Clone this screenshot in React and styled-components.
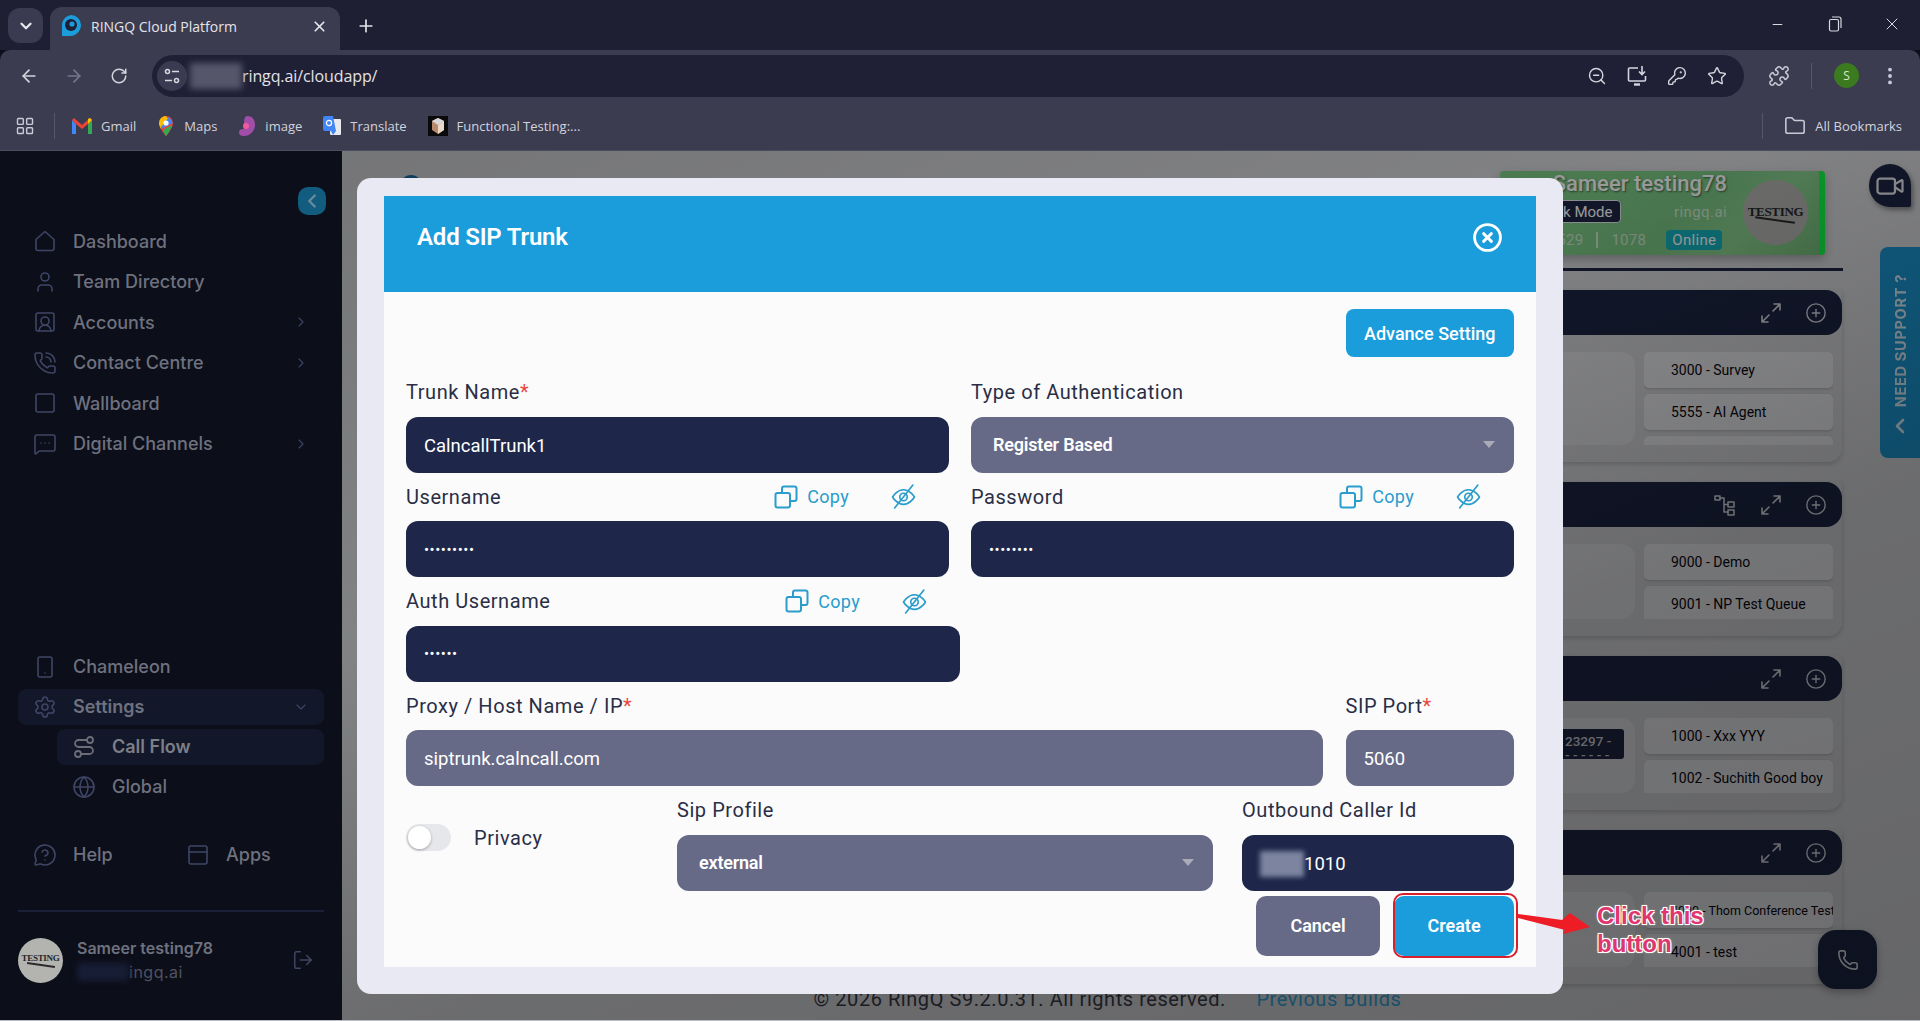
import React from "react";
import styled, { createGlobalStyle } from "styled-components";
import {
  ArrowLeft, ArrowRight, RotateCw, ZoomOut, KeyRound, Star, Puzzle, EllipsisVertical, LayoutGrid, Folder, X, Plus,
  ChevronDown, ChevronRight, ChevronLeft, Minus, User, SquareUserRound, PhoneCall, Square, MessageSquareMore,
  Smartphone, Settings, Route, Globe, MessageCircleQuestion, PanelTop, LogOut, CirclePlus, Video, Phone, CircleX,
} from "lucide-react";

const Global = createGlobalStyle`
  html, body { margin: 0; padding: 0; width: 1920px; height: 1021px; overflow: hidden; background: #0c0e19; }
  * { box-sizing: border-box; }
`;

const Page = styled.div`
  width: 1920px; height: 1021px; display: flex; flex-direction: column; overflow: hidden;
  font-family: "Roboto", "Liberation Sans", sans-serif;
`;

/* ---------- browser chrome ---------- */
const TabStrip = styled.div`
  height: 50px; background: #1e1f33; display: flex; align-items: flex-start; padding: 7px 0 0 8px; flex: none;
`;
const TabSearch = styled.div`
  width: 35px; height: 35px; margin-top: 1px; border-radius: 12px; background: #3a3b50; color: #e8e8ee;
  display: flex; align-items: center; justify-content: center;
`;
const Tab = styled.div`
  width: 290px; height: 43px; margin-left: 7px; background: #3b3c50; border-radius: 12px 12px 0 0; display: flex;
  align-items: center; padding: 0 12px 5px 10px; color: #e4e4ea; font: 400 14px "Open Sans", sans-serif;
`;
const TabTitle = styled.span` margin-left: 9px; flex: 1; white-space: nowrap; `;
const NewTab = styled.div` margin: 9px 0 0 16px; color: #e4e4ea; display: flex; `;
const WinControls = styled.div` margin: -7px 0 0 auto; display: flex; height: 48px; `;
const WinBtn = styled.div` width: 57px; display: flex; align-items: center; justify-content: center; color: #d9d9e0; `;

const Toolbar = styled.div`
  height: 51px; background: #3b3c50; display: flex; align-items: center; padding: 0 0 0 6px; flex: none;
  border-radius: 10px 10px 0 0;
`;
const NavBtn = styled.div`
  width: 45px; display: flex; justify-content: center; color: ${p => (p.$off ? "#75768a" : "#d4d5de")};
`;
const Omnibox = styled.div`
  margin: 0 0 0 11px; width: 1592px; height: 42px; border-radius: 21px; background: #1f2035; display: flex; align-items: center;
  padding: 0 7px 0 5px; color: #e2e2e8; font: 400 16px "Open Sans", sans-serif;
`;
const TuneChip = styled.div`
  width: 30px; height: 30px; border-radius: 50%; background: #3a3b50; display: flex; align-items: center; justify-content: center;
  color: #d8d8e0; flex: none; margin-right: 3px;
`;
const Smudge = styled.span`
  display: inline-block; flex: none; width: ${p => p.$w}px; height: ${p => p.$h}px; background: ${p => p.$c};
  filter: blur(${p => p.$blur || 3}px);
`;
const UrlText = styled.span` flex: 1; letter-spacing: -0.1px; `;
const OmniIcon = styled.div` width: 40px; display: flex; justify-content: center; color: #d4d5de; `;
const ToolIcon = styled.div` display: flex; color: #c9cad6; margin-left: ${p => p.$ml}px; `;
const ToolSep = styled.div` width: 1px; height: 26px; background: #55566a; margin-left: ${p => p.$ml}px; `;
const ProfileDot = styled.div`
  width: 25px; height: 25px; border-radius: 50%; background: #3b7a1f; color: #d6e8cf; margin-left: 22px;
  font: 500 12px "Open Sans", sans-serif; display: flex; align-items: center; justify-content: center;
`;

const Bookmarks = styled.div`
  height: 50px; background: #3b3c50; border-bottom: 1px solid #4b4c60; display: flex; align-items: center; padding: 0 18px 0 15px;
  color: #d2d3dc; font: 400 13px "Open Sans", sans-serif; flex: none;
`;
const Bookmark = styled.div` display: flex; align-items: center; gap: 9px; margin-left: ${p => p.$ml ?? 21}px; white-space: nowrap; `;
const AllBookmarks = styled.div` margin-left: auto; display: flex; align-items: center; white-space: nowrap; `;

/* ---------- app ---------- */
const Viewport = styled.div` position: relative; flex: 1; display: flex; min-height: 0; `;
const BottomLine = styled.div` height: 1px; background: #b9bec4; flex: none; `;

const Sidebar = styled.aside`
  width: 342px; flex: none; background: #0c0e19; padding: 36px 18px 0; display: flex; flex-direction: column;
  font-family: "Inter", sans-serif; color: #6e717f;
`;
const CollapseBtn = styled.div`
  width: 28px; height: 28px; border-radius: 10px; background: #125c80; color: #6c8b9d; align-self: flex-end; margin: 0 -2px 8px 0;
  display: flex; align-items: center; justify-content: center; flex: none;
`;
const NavList = styled.nav`
  display: flex; flex-direction: column; gap: ${p => p.$gap}px; margin-top: ${p => p.$mt || 0}px;
`;
const NavItem = styled.div`
  height: 36px; display: flex; align-items: center; gap: 16px; padding: 0 15px; border-radius: 8px; font-size: 18px;
  font-weight: ${p => (p.$active ? 600 : 500)}; margin-left: ${p => (p.$sub ? 39 : 0)}px;
  background: ${p => (p.$active ? "#121829" : "transparent")}; color: ${p => (p.$sub && p.$active ? "#7d7f88" : "#6e717f")};
  white-space: nowrap;
`;
const NavIcon = styled.span` display: flex; flex: none; width: 24px; color: ${p => p.$c || "#3f4566"}; `;
const NavChevron = styled.span` display: flex; margin-left: auto; color: #3f4566; `;
const HelpRow = styled.div` display: grid; grid-template-columns: 153px 153px; margin-top: 32px; `;
const SideDivider = styled.div` height: 2px; background: #1b1f38; margin-top: 37px; flex: none; `;
const UserRow = styled.div` display: flex; align-items: center; margin-top: 26px; `;
const UserAvatar = styled.div`
  width: ${p => p.$d}px; height: ${p => p.$d}px; border-radius: 50%; flex: none; background: ${p => p.$bg};
  display: flex; align-items: center; justify-content: center; overflow: hidden; position: relative; flex-direction: column;
  color: #26262a; font: 700 ${p => p.$fs}px "Liberation Serif", serif; letter-spacing: -0.3px; line-height: 1;
`;
const AvatarScrawl = styled.span` display: block; width: 62%; height: 2px; background: #2b2b2e; transform: rotate(8deg); margin-top: 1px; `;
const UserText = styled.div` margin-left: 14px; display: flex; flex-direction: column; gap: 4px; `;
const UserName = styled.div` font-size: 16px; font-weight: 600; color: #6e717f; line-height: 20px; `;
const UserMail = styled.div` font-size: 16px; font-weight: 400; color: #4f5264; display: flex; align-items: center; line-height: 20px; letter-spacing: .5px; `;
const LogoutBtn = styled.span` margin-left: auto; margin-right: 10px; display: flex; color: #3f4566; `;

const Main = styled.main`
  position: relative; flex: 1; min-width: 0; background: #d8d9dd; padding: 20px 77px 0 30px; display: flex; flex-direction: column;
`;
const Backdrop = styled.div`
  position: absolute; inset: 0; z-index: 5;
  background: linear-gradient(160deg, rgba(0,0,0,.46) 0%, rgba(0,0,0,.40) 35%, rgba(0,0,0,.5) 62%, rgba(0,0,0,.53) 100%);
`;
const LogoDot = styled.div`
  position: absolute; left: 58px; top: 24px; width: 22px; height: 22px; border-radius: 50%; background: #1b6fa8;
`;
const ProfileCard = styled.div`
  align-self: flex-end; margin-right: 18px; width: 325px; height: 84px; flex: none; display: flex; align-items: stretch; border-radius: 4px;
  background: linear-gradient(135deg, #7fcf88 0%, #7ac683 55%, #88d08e 75%, #72bb7a 100%);
  box-shadow: 0 4px 10px rgba(0,0,0,.25); overflow: hidden;
`;
const CardInfo = styled.div` flex: 1; min-width: 0; display: flex; flex-direction: column; `;
const CardTitle = styled.div`
  text-align: right; font-size: 22px; font-weight: 500; line-height: 26px; color: #fff; text-shadow: 1px 1px 2px rgba(0,0,0,.5);
`;
const CardRow = styled.div` display: flex; align-items: center; justify-content: space-between; margin-top: ${p => p.$mt}px; `;
const ModeChip = styled.div`
  height: 23px; padding: 0 8px; margin-left: 31px; border-radius: 4px; background: #1c2544; border: 1px solid #e6e8ee; color: #fff;
  font-size: 15px; display: flex; align-items: center;
`;
const CardMail = styled.div` font-size: 15px; color: #cfe9cf; letter-spacing: .4px; `;
const CardStats = styled.div`
  display: flex; align-items: center; font-size: 15px; color: #cde6cd; letter-spacing: .3px; margin-left: 31px; gap: 13px;
`;
const StatBar = styled.span` width: 2px; height: 16px; background: #cde6cd; `;
const OnlineChip = styled.span`
  height: 20px; padding: 0 6px; border-radius: 4px; background: #14b0bd; color: #fff; display: flex; align-items: center; margin-left: 7px;
`;
const CardPhoto = styled.div` margin: 9px 11px 0 16px; flex: none; `;
const CardBar = styled.div` width: 6px; flex: none; background: #12f947; `;
const Rule = styled.div` height: 3px; background: #1c2544; margin-top: 13px; flex: none; `;
const PanelStack = styled.div` margin-top: 19px; display: flex; flex-direction: column; gap: 20px; padding-right: 1px; flex: none; `;
const Panel = styled.section` background: #d4d5d8; border-radius: 0 0 14px 0; box-shadow: 0 2px 5px rgba(0,0,0,.18); `;
const PanelHead = styled.header`
  height: 45px; background: #1c2544; border-radius: 0 16px 16px 0; display: flex; align-items: center; justify-content: flex-end;
  padding-right: 15px; gap: 22px; color: #dadce4;
`;
const PanelBody = styled.div` display: flex; gap: 9px; padding: 17px 9px 17px 0; `;
const PanelLeft = styled.div`
  flex: 1; height: ${p => p.$h}px; background: #e0e1e4; border-radius: 0 14px 14px 0; display: flex; justify-content: flex-end; padding: 11px 11px 0 0;
`;
const DarkChip = styled.div`
  width: 200px; height: 30px; background: #1c2544; border-radius: 3px; color: #d0d2da; font-size: 13.5px; font-weight: 500; line-height: 14px;
  padding: 5px 0 0 141px; overflow: hidden; white-space: nowrap;
`;
const ItemList = styled.div` width: 189px; height: ${p => p.$h}px; overflow: hidden; display: flex; flex-direction: column; gap: 6px; `;
const Item = styled.div`
  height: 36px; flex: none; border-radius: 5px; background: #e8e9ed; box-shadow: 0 1px 3px rgba(0,0,0,.18); padding: 0 0 0 27px;
  display: flex; align-items: center; color: #05050f; font-size: ${p => p.$fs || 14}px; white-space: nowrap;
`;
const Footer = styled.footer` margin-top: 3px; text-align: center; font-size: 20px; line-height: 24px; color: #3a3c48; flex: none; letter-spacing: .55px; `;
const FootLink = styled.span` color: #35a5dc; margin-left: 25px; `;

const VideoBtn = styled.div`
  position: absolute; left: 1527px; top: 13px; width: 42px; height: 43px; border-radius: 50% 50% 2px 50%; background: #1c2544; color: #e6e8ee;
  display: flex; align-items: center; justify-content: center; box-shadow: 2px 3px 5px rgba(0,0,0,.4);
`;
const SupportTab = styled.div`
  position: absolute; right: 0; top: 96px; width: 40px; height: 211px; background: #1b96d2; border-radius: 8px 0 0 8px; color: #d6ebf7;
  display: flex; flex-direction: column; align-items: center; padding-top: 27px; gap: 7px;
`;
const SupportText = styled.span`
  writing-mode: vertical-rl; transform: rotate(180deg); font: 700 14.5px "Inter", sans-serif; letter-spacing: .7px; white-space: nowrap;
`;
const PhoneBtn = styled.div`
  position: absolute; left: 1476px; top: 779px; width: 59px; height: 59px; border-radius: 18px; background: #1c2544; color: #d8dae2;
  display: flex; align-items: center; justify-content: center; box-shadow: 0 3px 8px rgba(0,0,0,.3);
`;

/* ---------- modal ---------- */
const Modal = styled.div`
  position: absolute; z-index: 10; left: 357px; top: 27px; width: 1206px; background: #e8e9f2; border-radius: 14px;
  padding: 18px 27px 27px;
`;
const ModalHead = styled.div`
  height: 96px; background: #1b9cdb; display: flex; align-items: center; justify-content: space-between; padding: 0 33px 14px;
  color: #fff;
`;
const ModalTitle = styled.h2` margin: 0; font-size: 24px; font-weight: 600; letter-spacing: -.2px; `;
const ModalBody = styled.div` background: #fbfbfc; padding: 17px 22px 11px; `;
const TopActions = styled.div` display: flex; justify-content: flex-end; margin-bottom: 22px; `;
const AdvanceBtn = styled.button`
  all: unset; box-sizing: border-box; width: 168.5px; height: 48px; border-radius: 8px; background: #1b9cdb; color: #fff; font: 500 18px "Roboto", sans-serif;
  display: flex; align-items: center; justify-content: center;
`;
const FormRow = styled.div`
  display: grid; grid-template-columns: ${p => p.$cols}; column-gap: ${p => p.$gap || 22}px; margin-bottom: 11px;
`;
const Field = styled.div` min-width: 0; `;
const LabelRow = styled.div`
  height: 26px; margin-bottom: 11.5px; display: flex; align-items: center; justify-content: space-between; padding-right: 33px;
`;
const Label = styled.label` font-size: 20px; color: #2a2e45; letter-spacing: .55px; white-space: nowrap; `;
const Req = styled.span` color: #e8483f; `;
const CopyGroup = styled.div` display: flex; align-items: center; color: #2a9dcc; font-size: 18px; letter-spacing: .3px; `;
const CopyText = styled.span` margin: 0 42px 0 9px; `;
const InputBox = styled.div`
  height: 56px; border-radius: 12px; display: flex; align-items: center; color: #fff; padding: 2px 18px 0; font-size: 18.5px;
  background: ${p => (p.$muted ? "#676a87" : "#1e274a")}; white-space: nowrap;
`;
const Dots = styled.span` font-size: 15px; letter-spacing: .55px; margin-top: -1px; `;
const SelectBox = styled.div`
  height: 56px; border-radius: 12px; background: #676a87; color: #fff; display: flex; align-items: center; justify-content: space-between;
  padding: 0 19px 0 22px; font-size: 18px; font-weight: 600; letter-spacing: -.2px;
`;
const Caret = styled.span`
  width: 0; height: 0; border-left: 6px solid transparent; border-right: 6px solid transparent; border-top: 7px solid #a9abb8;
`;
const ProfileRow = styled.div` display: grid; grid-template-columns: 271px 536px 272px; column-gap: 0; `;
const PrivacyGroup = styled.div` display: flex; align-items: center; gap: 23px; margin-top: 27px; align-self: start; height: 27px; `;
const Switch = styled.span`
  width: 45px; height: 27px; border-radius: 14px; background: #e6e7ea; padding: 2px; flex: none; display: flex;
`;
const SwitchKnob = styled.span` width: 23px; height: 23px; border-radius: 50%; background: #fff; box-shadow: 0 1px 3px rgba(0,0,0,.3); `;
const OutboundField = styled(Field)` margin-left: 29px; width: 272px; transform: none; `;
const ActionRow = styled.div` display: flex; justify-content: flex-end; gap: 14px; margin-top: 5px; `;
const ActionBtn = styled.button`
  all: unset; box-sizing: border-box; position: relative; height: 60px; width: ${p => p.$w}px; border-radius: 10px; color: #fff;
  background: ${p => (p.$primary ? "#1b9cdb" : "#676a87")}; font: 600 18px "Roboto", sans-serif; display: flex; align-items: center; justify-content: center;
`;
const CalloutRing = styled.span`
  position: absolute; inset: -3px -4px -2px -1px; border: 2px solid #d8202c; border-radius: 10px;
`;
const CalloutArrow = styled.svg` position: absolute; z-index: 11; left: 1515px; top: 759px; `;
const CalloutText = styled.div`
  position: absolute; z-index: 11; left: 1597px; top: 751px; width: 130px; font: 700 24px/28px "Liberation Sans", sans-serif; color: #e0356f;
  text-shadow: -1px -1px 0 #fff, 1px -1px 0 #fff, -1px 1px 0 #fff, 1px 1px 0 #fff, 0 0 3px rgba(255,255,255,.8);
`;

/* ---------- drawn icons ---------- */
const Svg = ({ s = 24, sw = 2, children, fill = "none" }) => (
  <svg width={s} height={s} viewBox="0 0 24 24" fill={fill} stroke="currentColor" strokeWidth={sw} strokeLinecap="round" strokeLinejoin="round">{children}</svg>
);
const HomeIcon = () => <Svg sw={1.6}><path d="M3 10.5 12 2.5l9 8V19.5a2 2 0 0 1-2 2H5a2 2 0 0 1-2-2z" /></Svg>;
const ExpandIcon = () => <Svg s={24} sw={1.6}><path d="M15 3h6v6M21 3l-7 7M3 15v6h6M3 21l7-7" /></Svg>;
const TreeIcon = () => (
  <Svg s={24} sw={1.5}>
    <rect x="2" y="3" width="5" height="4" /><rect x="15" y="9" width="6" height="5" /><rect x="15" y="17" width="6" height="5" />
    <path d="M7 5h4v14h4M11 11.5h4" />
  </Svg>
);
const CopyIcon = () => (
  <Svg s={24} sw={2}>
    <rect x="1.5" y="8" width="14.5" height="14.5" rx="2" /><path d="M8 8V3.5a2 2 0 0 1 2-2h10.5a2 2 0 0 1 2 2V14a2 2 0 0 1-2 2H16" />
  </Svg>
);
const EyeOffIcon = () => (
  <Svg s={25} sw={1.6}>
    <path d="M1.5 12.5S5.5 5.5 12 5.5s10.5 7 10.5 7-4 7-10.5 7-10.5-7-10.5-7z" /><circle cx="12" cy="12.5" r="3.6" /><path d="M3.5 23 21 1" />
  </Svg>
);
const TuneIcon = () => (
  <svg width="18" height="18" viewBox="0 0 18 18" fill="none" stroke="currentColor" strokeWidth="1.5">
    <circle cx="4.5" cy="4.5" r="2" /><path d="M9 4.5h7M2 13.5h7" /><circle cx="13.5" cy="13.5" r="2" />
  </svg>
);
const MonitorDownIcon = () => (
  <svg width="22" height="22" viewBox="0 0 22 22" fill="none" stroke="currentColor" strokeWidth="1.6">
    <path d="M12 3H3.5a1 1 0 0 0-1 1v11a1 1 0 0 0 1 1h15a1 1 0 0 0 1-1v-4" /><path d="M16 1v8M13 6.5l3 3 3-3" /><path d="M8 19.5h6" strokeWidth="2.4" />
  </svg>
);
const RestoreIcon = () => (
  <svg width="14" height="16" viewBox="0 0 14 16" fill="none" stroke="currentColor" strokeWidth="1.2">
    <rect x="1.5" y="3.5" width="9" height="11.5" rx="1.5" /><path d="M4 1h7a2 2 0 0 1 2 2v9" />
  </svg>
);
const TabFavicon = () => (
  <svg width="22" height="24" viewBox="0 0 22 24">
    <path d="M11 1a10 10 0 0 1 10 10c0 6-5 11-11 11H2V10A10 10 0 0 1 11 1z" fill="#1b9cdb" />
    <circle cx="11" cy="11" r="6" fill="#1e1f33" /><circle cx="12" cy="10" r="2.6" fill="#1b9cdb" />
  </svg>
);
const GmailIcon = () => (
  <svg width="20" height="18" viewBox="0 0 20 18">
    <path d="M0 3v14h4V7z" fill="#4285f4" /><path d="M16 7v10h4V3z" fill="#34a853" />
    <path d="M0 3l4 4 6 5 6-5 4-4-2-2-8 7-8-7z" fill="#ea4335" /><path d="M16 2l2-1 2 2-4 4z" fill="#fbbc04" />
  </svg>
);
const MapsIcon = () => (
  <svg width="18" height="22" viewBox="0 0 18 22">
    <path d="M9 1a7 7 0 0 1 7 7c0 5-7 13-7 13S2 13 2 8a7 7 0 0 1 7-7z" fill="#ea4335" /><path d="M2 8c0 2 1 4 2 6l8-9-3-4a7 7 0 0 0-7 7z" fill="#fbbc04" />
    <path d="M12 2l4 6-12 6 0-2z" fill="#4285f4" /><path d="M6 15c1 3 3 6 3 6s5-6 6-11z" fill="#34a853" /><circle cx="9" cy="8" r="2.6" fill="#fff" />
  </svg>
);
const ImageIcon = () => (
  <svg width="18" height="22" viewBox="0 0 18 22">
    <path d="M9 1c5 0 8 3 8 9s-5 11-11 11c-3 0-5-1-5-4 0-2 2-3 4-3 3-1 1-3 1-6 0-4 1-7 3-7z" fill="#a14ea8" /><circle cx="8" cy="11" r="3" fill="#f05a9c" />
  </svg>
);
const TranslateIcon = () => (
  <svg width="18" height="20" viewBox="0 0 18 20">
    <rect x="7" y="3" width="11" height="16" rx="1" fill="#e8eaed" /><path d="M0 2a2 2 0 0 1 2-2h8l3 15H2a2 2 0 0 1-2-2z" fill="#4285f4" />
    <circle cx="6" cy="7" r="2.6" fill="none" stroke="#fff" strokeWidth="1.2" /><path d="M10 19l3-4h-5z" fill="#4285f4" />
  </svg>
);
const CubeIcon = () => (
  <svg width="20" height="20" viewBox="0 0 20 20">
    <rect width="20" height="20" fill="#0a0a0c" /><path d="M10 2l6 3v9l-6 4-6-4V5z" fill="#b98a6c" /><path d="M10 9l6-4v9l-6 4z" fill="#e9d9c8" /><path d="M10 2l6 3-6 4-6-4z" fill="#d9d9d9" />
  </svg>
);
const BrandLogo = ({ d, fs }) => (
  <UserAvatar $d={d} $bg="#b3b4b0" $fs={fs}>
    TESTING
    <AvatarScrawl />
  </UserAvatar>
);

const NAV_TOP = [
  ["Dashboard", <HomeIcon key="i" />],
  ["Team Directory", <User size={24} strokeWidth={1.6} key="i" />],
  ["Accounts", <SquareUserRound size={24} strokeWidth={1.6} key="i" />, true],
  ["Contact Centre", <PhoneCall size={24} strokeWidth={1.6} key="i" />, true],
  ["Wallboard", <Square size={24} strokeWidth={1.6} key="i" />],
  ["Digital Channels", <MessageSquareMore size={24} strokeWidth={1.6} key="i" />, true],
];

const PANELS = [
  { lh: 93, items: ["3000 - Survey", "5555 - AI Agent", " "] },
  { lh: 75, tree: true, items: ["9000 - Demo", "9001 - NP Test Queue"] },
  { lh: 75, chip: true, items: ["1000 - Xxx YYY", "1002 - Suchith Good boy"] },
  { lh: 75, items: ["4000 - Thom Conference Test", "4001 - test"], small: true },
];

const CopyTools = () => (
  <CopyGroup>
    <CopyIcon />
    <CopyText>Copy</CopyText>
    <EyeOffIcon />
  </CopyGroup>
);

export default function App() {
  return (
    <Page>
      <Global />
      <TabStrip>
        <TabSearch><ChevronDown size={18} strokeWidth={3} /></TabSearch>
        <Tab>
          <TabFavicon />
          <TabTitle>RINGQ Cloud Platform</TabTitle>
          <X size={17} strokeWidth={2.4} />
        </Tab>
        <NewTab><Plus size={20} strokeWidth={2} /></NewTab>
        <WinControls>
          <WinBtn><Minus size={15} strokeWidth={1.6} /></WinBtn>
          <WinBtn><RestoreIcon /></WinBtn>
          <WinBtn><X size={20} strokeWidth={1.2} /></WinBtn>
        </WinControls>
      </TabStrip>
      <Toolbar>
        <NavBtn><ArrowLeft size={20} /></NavBtn>
        <NavBtn $off><ArrowRight size={20} /></NavBtn>
        <NavBtn><RotateCw size={18} /></NavBtn>
        <Omnibox>
          <TuneChip><TuneIcon /></TuneChip>
          <Smudge $w={52} $h={26} $c="#55566a" />
          <UrlText>ringq.ai/cloudapp/</UrlText>
          <OmniIcon><ZoomOut size={20} strokeWidth={1.7} /></OmniIcon>
          <OmniIcon><MonitorDownIcon /></OmniIcon>
          <OmniIcon><KeyRound size={20} strokeWidth={1.7} /></OmniIcon>
          <OmniIcon><Star size={20} strokeWidth={1.7} /></OmniIcon>
        </Omnibox>
        <ToolIcon $ml={24}><Puzzle size={22} strokeWidth={1.7} /></ToolIcon>
        <ToolSep $ml={21} />
        <ProfileDot>S</ProfileDot>
        <ToolIcon $ml={20}><EllipsisVertical size={22} strokeWidth={2.2} /></ToolIcon>
      </Toolbar>
      <Bookmarks>
        <ToolIcon $ml={0}><LayoutGrid size={20} strokeWidth={1.7} /></ToolIcon>
        <ToolSep $ml={19} />
        <Bookmark $ml={17}><GmailIcon />Gmail</Bookmark>
        <Bookmark><MapsIcon />Maps</Bookmark>
        <Bookmark><ImageIcon />image</Bookmark>
        <Bookmark><TranslateIcon />Translate</Bookmark>
        <Bookmark><CubeIcon />Functional Testing:...</Bookmark>
        <AllBookmarks>
          <ToolSep $ml={0} />
          <ToolIcon $ml={21}><Folder size={22} strokeWidth={1.7} /></ToolIcon>
          <Bookmark $ml={9}>All Bookmarks</Bookmark>
        </AllBookmarks>
      </Bookmarks>

      <Viewport>
        <Sidebar>
          <CollapseBtn><ChevronLeft size={22} strokeWidth={2.5} /></CollapseBtn>
          <NavList $gap={4.5}>
            {NAV_TOP.map(([t, icon, more]) => (
              <NavItem key={t}>
                <NavIcon>{icon}</NavIcon>{t}
                {more && <NavChevron><ChevronRight size={16} strokeWidth={1.6} /></NavChevron>}
              </NavItem>
            ))}
          </NavList>
          <NavList $gap={4} $mt={187}>
            <NavItem><NavIcon><Smartphone size={24} strokeWidth={1.6} /></NavIcon>Chameleon</NavItem>
            <NavItem $active><NavIcon><Settings size={24} strokeWidth={1.6} /></NavIcon>Settings<NavChevron><ChevronDown size={16} strokeWidth={1.6} /></NavChevron></NavItem>
            <NavItem $sub $active><NavIcon $c="#6b6d77"><Route size={24} strokeWidth={1.8} /></NavIcon>Call Flow</NavItem>
            <NavItem $sub><NavIcon><Globe size={24} strokeWidth={1.6} /></NavIcon>Global</NavItem>
          </NavList>
          <HelpRow>
            <NavItem><NavIcon><MessageCircleQuestion size={24} strokeWidth={1.6} /></NavIcon>Help</NavItem>
            <NavItem><NavIcon><PanelTop size={24} strokeWidth={1.6} /></NavIcon>Apps</NavItem>
          </HelpRow>
          <SideDivider />
          <UserRow>
            <BrandLogo d={45} fs={9} />
            <UserText>
              <UserName>Sameer testing78</UserName>
              <UserMail><Smudge $w={52} $h={18} $c="#171d35" />ingq.ai</UserMail>
            </UserText>
            <LogoutBtn><LogOut size={22} strokeWidth={1.6} /></LogoutBtn>
          </UserRow>
        </Sidebar>

        <Main>
          <LogoDot />
          <ProfileCard>
            <CardInfo>
              <CardTitle>Sameer testing78</CardTitle>
              <CardRow $mt={3}>
                <ModeChip>Dark Mode</ModeChip>
                <CardMail>ringq.ai</CardMail>
              </CardRow>
              <CardRow $mt={7}>
                <CardStats>
                  917529<StatBar />1078
                  <OnlineChip>Online</OnlineChip>
                </CardStats>
              </CardRow>
            </CardInfo>
            <CardPhoto><BrandLogo d={65} fs={13} /></CardPhoto>
            <CardBar />
          </ProfileCard>
          <Rule />
          <PanelStack>
            {PANELS.map((p, i) => (
              <Panel key={i}>
                <PanelHead>
                  {p.tree && <TreeIcon />}
                  <ExpandIcon />
                  <CirclePlus size={22} strokeWidth={1.5} />
                </PanelHead>
                <PanelBody>
                  <PanelLeft $h={p.lh}>
                    {p.chip && <DarkChip>23297 -<br />- - - - - -</DarkChip>}
                  </PanelLeft>
                  <ItemList $h={p.lh}>
                    {p.items.map((t, j) => (
                      <Item key={j} $fs={p.small && j === 0 ? 12.5 : 14}>{t}</Item>
                    ))}
                  </ItemList>
                </PanelBody>
              </Panel>
            ))}
          </PanelStack>
          <Footer>© 2026 RingQ S9.2.0.31. All rights reserved. <FootLink>Previous Builds</FootLink></Footer>
          <VideoBtn><Video size={30} strokeWidth={1.8} /></VideoBtn>
          <SupportTab>
            <SupportText>NEED SUPPORT ?</SupportText>
            <ChevronLeft size={24} strokeWidth={2.6} />
          </SupportTab>
          <PhoneBtn><Phone size={22} strokeWidth={1.8} /></PhoneBtn>
          <Backdrop />
        </Main>

        <Modal>
          <ModalHead>
            <ModalTitle>Add SIP Trunk</ModalTitle>
            <CircleX size={31} strokeWidth={2.2} />
          </ModalHead>
          <ModalBody>
            <TopActions><AdvanceBtn>Advance Setting</AdvanceBtn></TopActions>
            <FormRow $cols="543px 543px">
              <Field>
                <LabelRow><Label>Trunk Name<Req>*</Req></Label></LabelRow>
                <InputBox>CalncallTrunk1</InputBox>
              </Field>
              <Field>
                <LabelRow><Label>Type of Authentication</Label></LabelRow>
                <SelectBox>Register Based<Caret /></SelectBox>
              </Field>
            </FormRow>
            <FormRow $cols="543px 543px">
              <Field>
                <LabelRow><Label>Username</Label><CopyTools /></LabelRow>
                <InputBox><Dots>•••••••••</Dots></InputBox>
              </Field>
              <Field>
                <LabelRow><Label>Password</Label><CopyTools /></LabelRow>
                <InputBox><Dots>••••••••</Dots></InputBox>
              </Field>
            </FormRow>
            <FormRow $cols="554px">
              <Field>
                <LabelRow><Label>Auth Username</Label><CopyTools /></LabelRow>
                <InputBox><Dots>••••••</Dots></InputBox>
              </Field>
            </FormRow>
            <FormRow $cols="917px 168.5px" $gap={22.5}>
              <Field>
                <LabelRow><Label>Proxy / Host Name / IP<Req>*</Req></Label></LabelRow>
                <InputBox $muted>siptrunk.calncall.com</InputBox>
              </Field>
              <Field>
                <LabelRow><Label>SIP Port<Req>*</Req></Label></LabelRow>
                <InputBox $muted>5060</InputBox>
              </Field>
            </FormRow>
            <ProfileRow>
              <PrivacyGroup>
                <Switch><SwitchKnob /></Switch>
                <Label>Privacy</Label>
              </PrivacyGroup>
              <Field>
                <LabelRow><Label>Sip Profile</Label></LabelRow>
                <SelectBox>external<Caret /></SelectBox>
              </Field>
              <OutboundField>
                <LabelRow><Label>Outbound Caller Id</Label></LabelRow>
                <InputBox><Smudge $w={44} $h={26} $c="#7c84a0" $blur={2.5} />1010</InputBox>
              </OutboundField>
            </ProfileRow>
            <ActionRow>
              <ActionBtn $w={124}>Cancel</ActionBtn>
              <ActionBtn $w={120} $primary>Create<CalloutRing /></ActionBtn>
            </ActionRow>
          </ModalBody>
        </Modal>
        <CalloutArrow width="80" height="30" viewBox="0 0 80 30">
          <polygon points="3,4 47,10 55,3 75,17 48,24 50,20 3,8" fill="#ee1c25" />
        </CalloutArrow>
        <CalloutText>Click this button</CalloutText>
      </Viewport>
      <BottomLine />
    </Page>
  );
}
